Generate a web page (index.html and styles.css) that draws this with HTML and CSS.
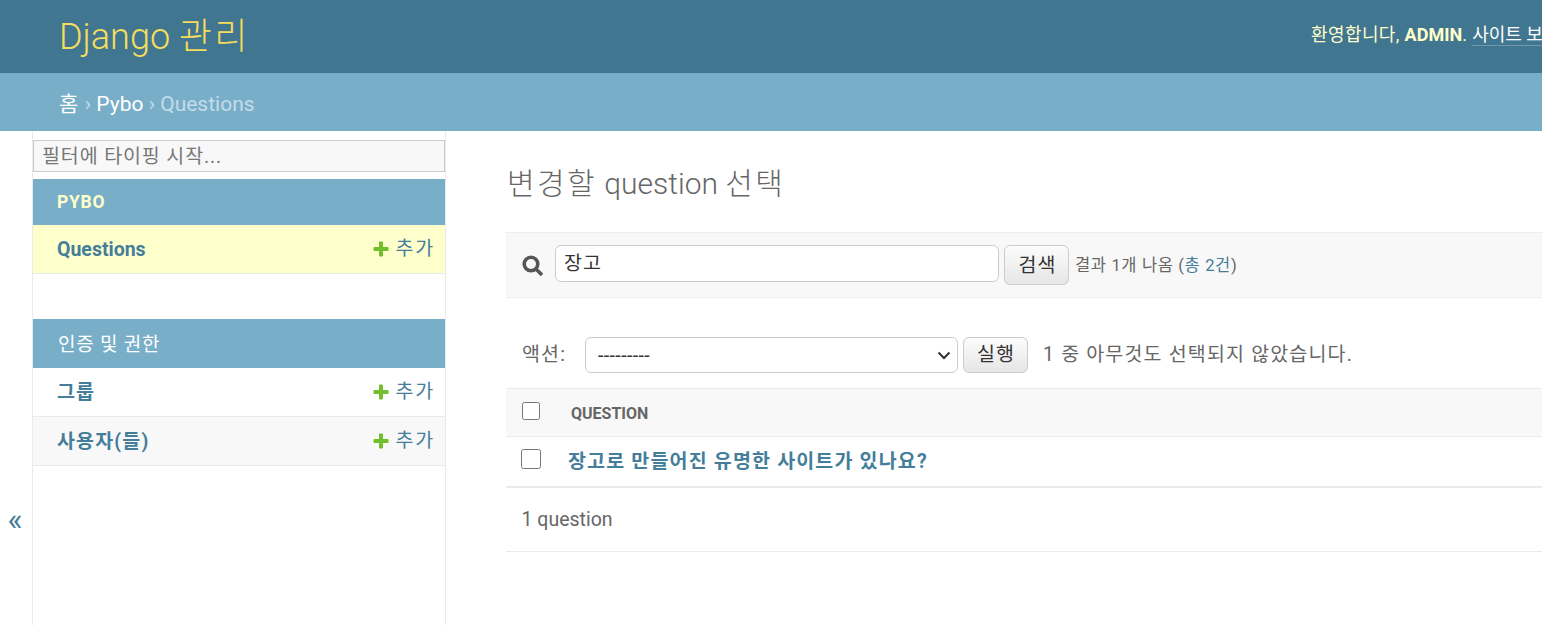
FILE: index.html
```html
<!DOCTYPE html>
<html lang="ko">
<head>
    <meta charset="UTF-8">
    <meta name="viewport" content="width=device-width, initial-scale=1.0">
    <title>변경할 question 선택 | Django 사이트 관리</title>
    <link rel="stylesheet" href="styles.css">
</head>
<body>
    <div class="container">
        <header class="header">
            <div class="branding">Django <span class="ko">관리</span></div>
            <div class="user-tools">
                환영합니다, <strong>ADMIN</strong>. <a href="#">사이트 보기</a> / <a href="#">비밀번호 변경</a> / <a href="#">로그아웃</a>
            </div>
        </header>

        <div class="breadcrumbs">
            <a class="ko" href="#">홈</a> <span class="sep">›</span> <a href="#">Pybo</a> <span class="sep">›</span> Questions
        </div>

        <div class="main">
            <button class="toggle-nav" type="button">«</button>

            <nav class="sidebar">
                <input class="nav-filter" type="search" placeholder="필터에 타이핑 시작...">

                <div class="app-module">
                    <div class="caption caption-latin">PYBO</div>
                    <div class="model-row current">
                        <a class="model-name" href="#">Questions</a>
                        <a class="addlink" href="#">
                            <svg class="plus" viewBox="0 0 16 16"><path d="M6 1.5C6 1 6.4.5 7 .5h2c.6 0 1 .5 1 1V6h4.500c.5 0 1 .4 1 1v2c0 .6-.5 1-1 1H10v4.500c0 .5-.4 1-1 1H7c-.6 0-1-.5-1-1V10H1.500c-.5 0-1-.4-1-1V7c0-.6.5-1 1-1H6z"/></svg>
                            추가
                        </a>
                    </div>
                </div>

                <div class="app-module">
                    <div class="caption caption-ko">인증 및 권한</div>
                    <div class="model-row">
                        <a class="model-name model-name-ko ko" href="#">그룹</a>
                        <a class="addlink" href="#">
                            <svg class="plus" viewBox="0 0 16 16"><path d="M6 1.5C6 1 6.4.5 7 .5h2c.6 0 1 .5 1 1V6h4.500c.5 0 1 .4 1 1v2c0 .6-.5 1-1 1H10v4.500c0 .5-.4 1-1 1H7c-.6 0-1-.5-1-1V10H1.500c-.5 0-1-.4-1-1V7c0-.6.5-1 1-1H6z"/></svg>
                            추가
                        </a>
                    </div>
                    <div class="model-row alt">
                        <a class="model-name model-name-ko ko" href="#">사용자(들)</a>
                        <a class="addlink" href="#">
                            <svg class="plus" viewBox="0 0 16 16"><path d="M6 1.5C6 1 6.4.5 7 .5h2c.6 0 1 .5 1 1V6h4.500c.5 0 1 .4 1 1v2c0 .6-.5 1-1 1H10v4.500c0 .5-.4 1-1 1H7c-.6 0-1-.5-1-1V10H1.500c-.5 0-1-.4-1-1V7c0-.6.5-1 1-1H6z"/></svg>
                            추가
                        </a>
                    </div>
                </div>
            </nav>

            <main class="content">
                <h1><span class="title-ko">변경할</span> question <span class="title-ko">선택</span></h1>

                <div class="toolbar">
                    <svg class="search-icon" viewBox="0 0 22 22"><circle cx="9" cy="9" r="6.800"/><path d="M14 14l6 6"/></svg>
                    <input class="search-input ko" type="text" value="장고">
                    <button class="btn btn-search ko" type="button">검색</button>
                    <span class="small-note">결과 1개 나옴 (<a href="#">총 2건</a>)</span>
                </div>

                <div class="actions">
                    <label class="actions-label ko">액션:</label>
                    <select class="actions-select">
                        <option>---------</option>
                    </select>
                    <button class="btn btn-run ko" type="button">실행</button>
                    <span class="action-counter ko">1 중 아무것도 선택되지 않았습니다.</span>
                </div>

                <div class="result-head">
                    <input class="check-head" type="checkbox">
                    <span class="column-title">QUESTION</span>
                </div>
                <div class="result-row">
                    <input class="check-row" type="checkbox">
                    <a class="result-link ko" href="#">장고로 만들어진 유명한 사이트가 있나요?</a>
                </div>
                <div class="paginator">1 question</div>
            </main>
        </div>
    </div>
</body>
</html>
```

FILE: styles.css
```css
html, body {
    margin: 0;
    height: 625px;
    overflow: hidden;
}

body {
    font-family: Roboto, "Noto Sans CJK KR", sans-serif;
    color: #666;
    background-color: #fff;
}

a {
    text-decoration: none;
    color: #447e9b;
}

.ko {
    letter-spacing: 0.06em;
}

.container {
    width: 1900px;
    height: 625px;
    display: flex;
    flex-direction: column;
}

.header {
    height: 73px;
    box-sizing: border-box;
    padding-left: 59px;
    display: flex;
    background-color: #417690;
}

.branding {
    flex: 0 0 1252px;
    font-size: 36px;
    font-weight: 300;
    line-height: 75px;
    color: #f5dd5d;
}

.user-tools {
    padding-top: 22px;
    font-size: 18px;
    letter-spacing: 0.4px;
    line-height: 26px;
    color: #ffc;
    white-space: nowrap;
}

.user-tools strong {
    font-weight: 700;
    letter-spacing: 0;
}

.user-tools a {
    color: #fff;
    letter-spacing: 0;
    border-bottom: 1px solid rgba(255, 255, 255, 0.25);
}

.breadcrumbs {
    height: 58px;
    box-sizing: border-box;
    padding-left: 59px;
    font-size: 21px;
    line-height: 62px;
    color: #c4dce8;
    background-color: #79aec8;
}

.breadcrumbs a {
    color: #fff;
}

.main {
    flex: 1;
    display: flex;
    min-height: 0;
}

.toggle-nav {
    width: 33px;
    padding: 282px 2px 0 0;
    border: 0;
    border-right: 1px solid #eaeaea;
    background: #fff;
    color: #447e9b;
    font-family: Roboto, sans-serif;
    font-size: 32px;
}

.sidebar {
    width: 412px;
    flex: none;
    padding-top: 9px;
    box-sizing: content-box;
    border-right: 1px solid #eaeaea;
}

.nav-filter {
    display: block;
    width: 100%;
    height: 32px;
    box-sizing: border-box;
    margin: 0 0 7px;
    padding: 0 8px;
    border: 1px solid #ccc;
    background-color: #f8f8f8;
    font-family: inherit;
    font-size: 19.5px;
    letter-spacing: 0.045em;
    color: #333;
    outline: 0;
}

.nav-filter::placeholder {
    color: #777;
}

.app-module {
    margin-bottom: 45px;
}

.caption {
    height: 49px;
    box-sizing: border-box;
    padding-left: 25px;
    font-size: 19px;
    line-height: 52px;
    color: #fff;
    background-color: #79aec8;
}

.caption-ko {
    letter-spacing: 0.04em;
}

.caption-latin {
    height: 46px;
    padding-left: 24px;
    font-size: 17.5px;
    font-weight: 700;
    letter-spacing: 0.75px;
    line-height: 46px;
    color: #ffc;
}

.model-row {
    height: 49px;
    box-sizing: border-box;
    padding: 0 10px 0 24px;
    display: flex;
    justify-content: space-between;
    align-items: center;
    border-bottom: 1px solid #eaeaea;
}

.model-row.current {
    background-color: #ffc;
}

.model-row.alt {
    background-color: #f8f8f8;
}

.model-name {
    font-size: 19.5px;
    font-weight: 700;
}

.model-name-ko {
    margin-top: -4px;
}

.addlink {
    font-size: 19.5px;
    letter-spacing: 1.8px;
    display: flex;
    align-items: center;
    gap: 7px;
    margin-top: -5px;
}

.plus {
    width: 16px;
    height: 16px;
    margin-top: 4px;
    fill: #70bf2b;
}

.content {
    flex: 1;
    padding: 33px 0 0 60px;
}

h1 {
    margin: 0 0 28px 1px;
    font-size: 30px;
    font-weight: 300;
    line-height: 40px;
    color: #666;
}

.title-ko {
    letter-spacing: 0.08em;
}

.toolbar {
    height: 66px;
    box-sizing: border-box;
    padding: 12px 0 0 16px;
    display: flex;
    align-items: flex-start;
    background-color: #f8f8f8;
    border-top: 1px solid #eee;
    border-bottom: 1px solid #eee;
}

.search-icon {
    width: 22px;
    height: 22px;
    margin-top: 10px;
    flex: none;
    fill: none;
    stroke: #555;
    stroke-width: 3.600;
}

.search-input {
    width: 444px;
    height: 37px;
    box-sizing: border-box;
    margin-left: 11px;
    padding: 0 8px 4px;
    border: 1px solid #ccc;
    border-radius: 6px;
    font-family: inherit;
    font-size: 19.5px;
    color: #333;
    outline: 0;
}

.btn {
    width: 65px;
    border: 1px solid #ccc;
    border-radius: 6px;
    background: linear-gradient(#fcfcfc, #e6e6e6);
    font-family: inherit;
    font-size: 19.5px;
    color: #333;
}

.btn-search {
    height: 40px;
    margin-left: 5px;
    padding: 0 0 4px 2px;
}

.small-note {
    margin: 9px 0 0 6px;
    font-size: 16.5px;
    letter-spacing: 0.65px;
    line-height: 24px;
    color: #666;
}

.actions {
    height: 91px;
    box-sizing: border-box;
    padding: 39px 0 0 16px;
    display: flex;
    align-items: flex-start;
    border-bottom: 1px solid #eaeaea;
}

.actions-label {
    font-size: 19.5px;
    line-height: 36px;
    width: 63px;
    flex: none;
}

.actions-select {
    width: 373px;
    height: 36px;
    box-sizing: border-box;
    padding: 0 12px;
    border: 1px solid #ccc;
    border-radius: 6px;
    appearance: none;
    background: #fff url("data:image/svg+xml,%3Csvg xmlns='http://www.w3.org/2000/svg' width='14' height='9'%3E%3Cpath d='M1.500 1.500L7 7l5.500-5.500' fill='none' stroke='%23333' stroke-width='2'/%3E%3C/svg%3E") no-repeat right 6px center;
    font-family: inherit;
    font-size: 19.5px;
    letter-spacing: 0.4px;
    color: #333;
}

.btn-run {
    height: 36px;
    margin-left: 5px;
    padding: 0 0 8px 1px;
}

.action-counter {
    margin-left: 15px;
    font-size: 19.5px;
    line-height: 35px;
}

.result-head {
    height: 48px;
    box-sizing: border-box;
    display: flex;
    align-items: center;
    background-color: #f8f8f8;
    border-bottom: 1px solid #eaeaea;
}

.check-head {
    width: 18px;
    height: 18px;
    margin: -3px 0 0 16px;
}

.column-title {
    margin: 2px 0 0 31px;
    font-size: 16px;
    font-weight: 700;
}

.result-row {
    height: 51px;
    box-sizing: border-box;
    display: flex;
    align-items: center;
    border-bottom: 2px solid #eaeaea;
}

.check-row {
    width: 20px;
    height: 20px;
    margin: -6px 0 0 15px;
}

.result-link {
    margin: -4px 0 0 27px;
    font-size: 19.5px;
    font-weight: 700;
}

.paginator {
    height: 64px;
    box-sizing: border-box;
    padding-left: 15.5px;
    font-size: 19.500px;
    line-height: 64px;
    border-bottom: 1px solid #eaeaea;
}
```
